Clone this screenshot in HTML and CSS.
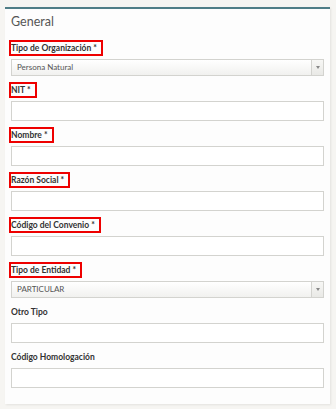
FILE: index.html
```html
<!DOCTYPE html>
<html lang="es">
  <head>
    <meta charset="UTF-8" />
    <meta name="viewport" content="width=device-width, initial-scale=1.0" />
    <title>General</title>
    <link rel="stylesheet" href="styles.css">
  </head>
  <body>
    <div class="panel">
      <h2 class="panel-title">General</h2>

      <div class="field">
        <label class="marked">Tipo de Organización *</label>
        <div class="select">
          <span class="select-value">Persona Natural</span>
          <span class="select-arrow"></span>
        </div>
      </div>

      <div class="field">
        <label class="marked">NIT *</label>
        <input type="text" class="text-input" />
      </div>

      <div class="field">
        <label class="marked">Nombre *</label>
        <input type="text" class="text-input" />
      </div>

      <div class="field">
        <label class="marked">Razón Social *</label>
        <input type="text" class="text-input" />
      </div>

      <div class="field">
        <label class="marked">Código del Convenio *</label>
        <input type="text" class="text-input" />
      </div>

      <div class="field">
        <label class="marked">Tipo de Entidad *</label>
        <div class="select">
          <span class="select-value">PARTICULAR</span>
          <span class="select-arrow"></span>
        </div>
      </div>

      <div class="field">
        <label>Otro Tipo</label>
        <input type="text" class="text-input" />
      </div>

      <div class="field">
        <label>Código Homologación</label>
        <input type="text" class="text-input" />
      </div>
    </div>
  </body>
</html>
```

FILE: styles.css
```css
body {
  margin: 0;
  padding: 7px 6px 8px 5px;
  background-color: #f6f5f2;
  font-family: Lato, "Open Sans", sans-serif;
  color: #333;
}
.panel {
  background-color: #fdfdfd;
  border-top: 2px solid #4f7d86;
  box-shadow: 1px 1px 2px rgba(0, 0, 0, 0.08);
  padding: 3px 6px 10px 6px;
}
.panel-title {
  margin: 0 0 8px 0;
  font-size: 12.5px;
  font-weight: normal;
  line-height: 20px;
  color: #555;
}
.field {
  display: flex;
  flex-direction: column;
  align-items: flex-start;
  margin-bottom: 6px;
}
.field label {
  box-sizing: border-box;
  height: 16px;
  line-height: 12px;
  font-size: 8.5px;
  font-weight: bold;
  color: #333;
  border: 2px solid transparent;
  margin-left: -2px;
  padding-right: 4px;
  margin-bottom: 3px;
}
.field label.marked {
  border-color: #ee0000;
}
.text-input {
  display: block;
  box-sizing: border-box;
  width: 100%;
  height: 20px;
  margin: 0;
  border: 1px solid #d3d3cf;
  background-color: #fff;
}
.select {
  display: flex;
  box-sizing: border-box;
  width: 100%;
  height: 17px;
  border: 1px solid #d3d3cf;
  background: linear-gradient(#ffffff, #f1f1ef);
}
.select-value {
  flex: 1;
  padding-left: 5px;
  font-size: 8px;
  line-height: 15px;
  color: #555;
}
.select-arrow {
  width: 11px;
  border-left: 1px solid #d3d3cf;
  background: linear-gradient(#f7f7f5, #e9e9e6);
  display: flex;
  align-items: center;
  justify-content: center;
}
.select-arrow::after {
  content: "";
  border-left: 2px solid transparent;
  border-right: 2px solid transparent;
  border-top: 3px solid #888;
}
```
